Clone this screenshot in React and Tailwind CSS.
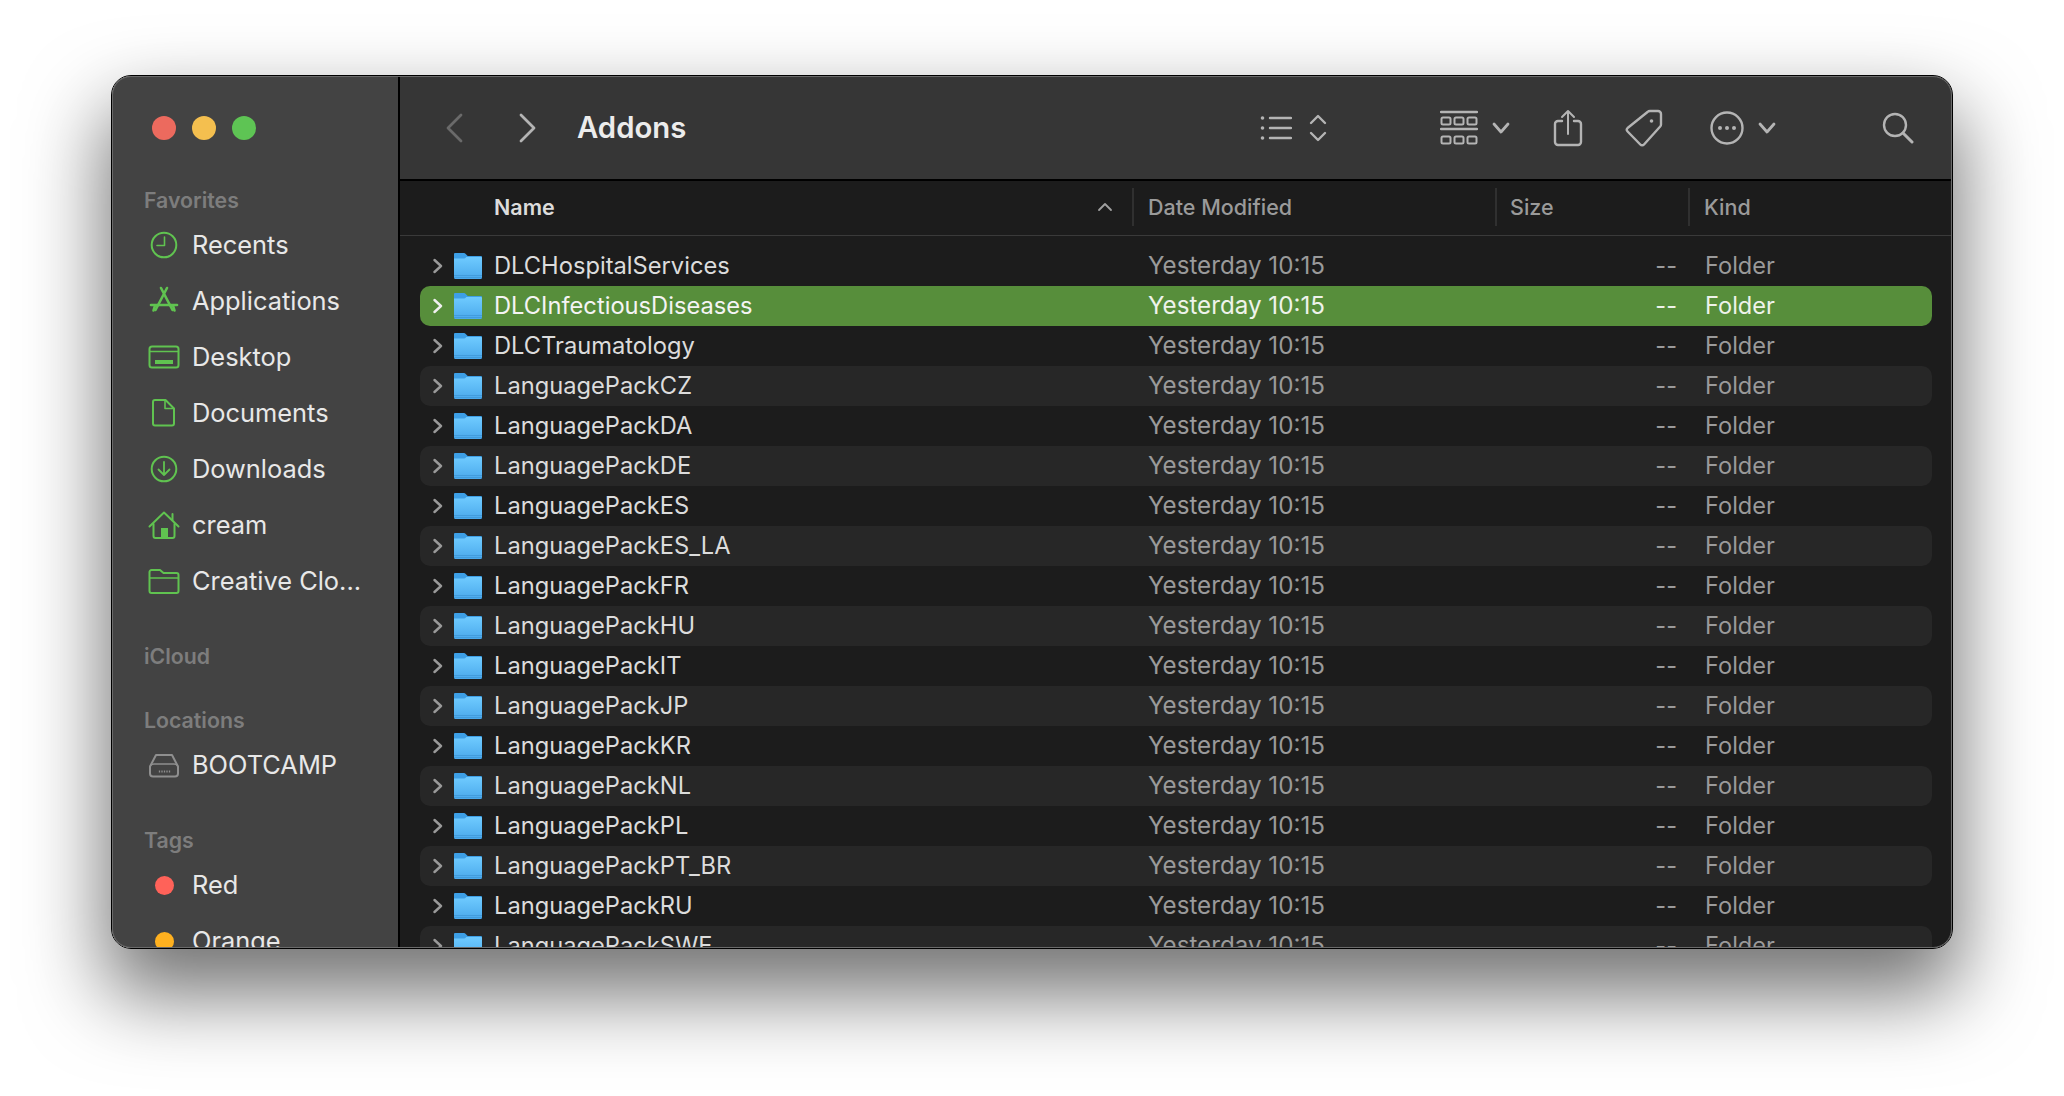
import React from 'react';

const FOLDERS = [
  'DLCHospitalServices', 'DLCInfectiousDiseases', 'DLCTraumatology', 'LanguagePackCZ', 'LanguagePackDA',
  'LanguagePackDE', 'LanguagePackES', 'LanguagePackES_LA', 'LanguagePackFR', 'LanguagePackHU', 'LanguagePackIT',
  'LanguagePackJP', 'LanguagePackKR', 'LanguagePackNL', 'LanguagePackPL', 'LanguagePackPT_BR', 'LanguagePackRU',
  'LanguagePackSWE',
];

const GREEN = '#60c350';

function SideIcon({ children, color = GREEN }) {
  return (
    <svg width="32" height="32" viewBox="0 0 32 32" fill="none" stroke={color} strokeWidth="2" strokeLinecap="round" strokeLinejoin="round">
      {children}
    </svg>
  );
}

const ClockIcon = () => (
  <SideIcon>
    <circle cx="16" cy="16" r="12.3" />
    <path d="M16.500 8v8.500H9" strokeWidth="1.600" />
  </SideIcon>
);

const AppsIcon = () => (
  <SideIcon>
    <path d="M13 3l11.500 22M19 3L7.500 25" strokeWidth="2.600" />
    <path d="M3 20h26" strokeWidth="2.600" />
    <path d="M5.500 25.500l1.500-5M26.500 25.500l-1.500-5" strokeWidth="2.600" />
  </SideIcon>
);

const DesktopIcon = () => (
  <SideIcon>
    <rect x="1.500" y="5.500" width="29" height="21" rx="2.500" />
    <path d="M2 10.500h28" strokeWidth="1.400" />
    <rect x="7" y="19" width="18" height="4" fill={GREEN} stroke="none" />
  </SideIcon>
);

const DocumentIcon = () => (
  <SideIcon>
    <path d="M7 3h10.500L26 11.500V26.500a2 2 0 0 1-2 2H7a2 2 0 0 1-2-2V5a2 2 0 0 1 2-2z" />
    <path d="M17 3.500V11.500h8.500" strokeWidth="1.600" />
  </SideIcon>
);

const DownloadIcon = () => (
  <SideIcon>
    <circle cx="16" cy="16" r="12.3" />
    <path d="M16 9v13M10.500 16.500L16 22l5.500-5.500" strokeWidth="1.800" />
  </SideIcon>
);

const HomeIcon = () => (
  <SideIcon>
    <path d="M1.500 17.500L16 3.500l14.500 14" />
    <path d="M5.500 15v12a2 2 0 0 0 2 2h17a2 2 0 0 0 2-2V15" />
    <path d="M24.500 5v6" />
    <rect x="13" y="19" width="7" height="9.500" fill={GREEN} stroke="none" />
  </SideIcon>
);

const FolderLineIcon = () => (
  <SideIcon>
    <path d="M3.500 5h8.500l3.500 3h13a2 2 0 0 1 2 2v16a2 2 0 0 1-2 2h-25a2 2 0 0 1-2-2V7a2 2 0 0 1 2-2z" />
    <path d="M2 13h28" strokeWidth="1.600" />
  </SideIcon>
);

const DriveIcon = () => (
  <SideIcon color="#8f8f8f">
    <path d="M8 6h16l6 11.500v7a3 3 0 0 1-3 3H5a3 3 0 0 1-3-3v-7z" />
    <path d="M2.500 16.500c1-1 2-1.500 3.500-1.500h20c1.500 0 2.500.5 3.500 1.500" strokeWidth="1.500" />
    <path d="M11.500 21.500v2M14 21.500v2M16.500 21.500v2M19 21.500v2M21.500 21.500v2" strokeWidth="1.300" strokeLinecap="butt" />
  </SideIcon>
);

function Dot({ color }) {
  return (
    <div className="flex h-8 w-8 items-center justify-center">
      <div className={`h-[19px] w-[19px] rounded-full ${color}`} />
    </div>
  );
}

function SideHeader({ label, first }) {
  return (
    <div className={`flex h-[33px] shrink-0 items-center pl-8 text-[21.3px] font-semibold text-[#7d7d7d] ${first ? 'mt-[44px]' : 'mt-[31px]'}`}>
      {label}
    </div>
  );
}

function SideRow({ icon, label }) {
  return (
    <div className="flex h-14 shrink-0 items-center gap-3 pl-9 text-[25.4px] text-[#e8e8e8]">
      {icon}
      <span className="whitespace-nowrap">{label}</span>
    </div>
  );
}

function Sidebar() {
  return (
    <aside className="flex w-[286px] shrink-0 flex-col bg-[#434343] pt-10">
      <div className="flex shrink-0 gap-4 pl-10">
        <div className="h-6 w-6 rounded-full bg-[#ec6a5e]" />
        <div className="h-6 w-6 rounded-full bg-[#f4bf4f]" />
        <div className="h-6 w-6 rounded-full bg-[#5ec454]" />
      </div>
      <SideHeader label="Favorites" first />
      <SideRow icon={<ClockIcon />} label="Recents" />
      <SideRow icon={<AppsIcon />} label="Applications" />
      <SideRow icon={<DesktopIcon />} label="Desktop" />
      <SideRow icon={<DocumentIcon />} label="Documents" />
      <SideRow icon={<DownloadIcon />} label="Downloads" />
      <SideRow icon={<HomeIcon />} label="cream" />
      <SideRow icon={<FolderLineIcon />} label="Creative Clo..." />
      <SideHeader label="iCloud" />
      <SideHeader label="Locations" />
      <SideRow icon={<DriveIcon />} label="BOOTCAMP" />
      <SideHeader label="Tags" />
      <SideRow icon={<Dot color="bg-[#ff6259]" />} label="Red" />
      <SideRow icon={<Dot color="bg-[#ffb11f]" />} label="Orange" />
    </aside>
  );
}

function ToolIcon({ w, h, className, children }) {
  return (
    <svg width={w} height={h} viewBox={`0 0 ${w} ${h}`} fill="none" stroke="#b4b4b4" strokeWidth="2.400" strokeLinecap="round" strokeLinejoin="round" className={`shrink-0 ${className || ''}`}>
      {children}
    </svg>
  );
}

function Toolbar() {
  return (
    <div className="flex h-[105px] shrink-0 items-center border-b-2 border-black bg-[#363636] text-[#b4b4b4]">
      <ToolIcon w={18} h={30} className="ml-[45px]">
        <path d="M16 2L3 15l13 13" stroke="#6a6a6a" strokeWidth="2.800" />
      </ToolIcon>
      <ToolIcon w={18} h={30} className="ml-14">
        <path d="M2 2l13 13L2 28" strokeWidth="2.800" />
      </ToolIcon>
      <div className="ml-10 text-[29.3px] font-semibold text-[#ececec]">Addons</div>

      <ToolIcon w={32} h={26} className="ml-[574px]">
        <path d="M10 3h21M10 13h21M10 23h21" />
        <circle cx="2.500" cy="3" r="1.800" fill="#b4b4b4" stroke="none" />
        <circle cx="2.500" cy="13" r="1.800" fill="#b4b4b4" stroke="none" />
        <circle cx="2.500" cy="23" r="1.800" fill="#b4b4b4" stroke="none" />
      </ToolIcon>
      <ToolIcon w={18} h={30} className="ml-[17px]">
        <path d="M2 10l7-7 7 7M2 20l7 7 7-7" />
      </ToolIcon>

      <ToolIcon w={38} h={36} className="ml-[113px]">
        <path d="M1 2h36M1 19h36" />
        <rect x="1.500" y="7.500" width="9" height="7" rx="1.500" strokeWidth="2" />
        <rect x="14.500" y="7.500" width="9" height="7" rx="1.500" strokeWidth="2" />
        <rect x="27.500" y="7.500" width="9" height="7" rx="1.500" strokeWidth="2" />
        <rect x="1.500" y="26.500" width="9" height="7" rx="1.500" strokeWidth="2" />
        <rect x="14.500" y="26.500" width="9" height="7" rx="1.500" strokeWidth="2" />
        <rect x="27.500" y="26.500" width="9" height="7" rx="1.500" strokeWidth="2" />
      </ToolIcon>
      <ToolIcon w={18} h={12} className="ml-[14px] mt-[1px]">
        <path d="M2 2l7 8 7-8" strokeWidth="2.800" />
      </ToolIcon>

      <ToolIcon w={30} h={38} className="ml-[43px]">
        <path d="M9 12H5a3 3 0 0 0-3 3v18a3 3 0 0 0 3 3h20a3 3 0 0 0 3-3V15a3 3 0 0 0-3-3h-4" />
        <path d="M15 25V2M9 8l6-6 6 6" strokeWidth="2" />
      </ToolIcon>

      <ToolIcon w={38} h={38} className="ml-[42px]">
        <path d="M25 2h8a3 3 0 0 1 3 3v10.500a3 3 0 0 1-.8 2L19 35.500a2.500 2.500 0 0 1-3.700 0L2.600 22.500a2.500 2.500 0 0 1 0-3.500L22.500 3a3.500 3.500 0 0 1 2.500-1z" />
        <circle cx="26.500" cy="12" r="1.800" fill="#b4b4b4" stroke="none" />
      </ToolIcon>

      <ToolIcon w={34} h={34} className="ml-[47px]">
        <circle cx="17" cy="17" r="15.500" />
        <circle cx="10" cy="17" r="2" fill="#b4b4b4" stroke="none" />
        <circle cx="17" cy="17" r="2" fill="#b4b4b4" stroke="none" />
        <circle cx="24" cy="17" r="2" fill="#b4b4b4" stroke="none" />
      </ToolIcon>
      <ToolIcon w={18} h={12} className="ml-[14px] mt-[1px]">
        <path d="M2 2l7 8 7-8" strokeWidth="2.800" />
      </ToolIcon>

      <ToolIcon w={32} h={32} className="ml-[106px]">
        <circle cx="13" cy="13" r="11" />
        <path d="M21 21l9 9" strokeWidth="3" />
      </ToolIcon>
    </div>
  );
}

function ListHeader() {
  return (
    <div className="flex h-[55px] shrink-0 items-center border-b border-[#3a3a3a] pb-[2px] text-[21.5px] font-medium text-[#9a9a9a]">
      <div className="ml-[94px] w-[598px] font-semibold text-[#dcdcdc]">Name</div>
      <svg width="16" height="10" viewBox="0 0 16 10" fill="none" stroke="#a0a0a0" strokeWidth="1.800" strokeLinecap="round" strokeLinejoin="round" className="ml-[5px] shrink-0">
        <path d="M2 8l6-6 6 6" />
      </svg>
      <div className="ml-[19px] h-[38px] w-[2px] shrink-0 bg-[#303030]" />
      <div className="ml-[14px] w-[347px]">Date Modified</div>
      <div className="h-[38px] w-[2px] shrink-0 bg-[#303030]" />
      <div className="ml-[13px] w-[178px]">Size</div>
      <div className="h-[38px] w-[2px] shrink-0 bg-[#303030]" />
      <div className="ml-[14px]">Kind</div>
    </div>
  );
}

function FolderIcon() {
  return (
    <svg width="28" height="26" viewBox="0 0 28 26" className="ml-[11px] shrink-0">
      <path d="M1 0h8.500c1 0 1.500.4 2.200 1l2 2H27a1 1 0 0 1 1 1v4H0V1a1 1 0 0 1 1-1z" fill="#3d9fe6" />
      <path d="M0 5.500h9.500c1.200 0 2-.5 2.800-1.500H27a1 1 0 0 1 1 1v19.500a1.500 1.500 0 0 1-1.500 1.500h-25A1.500 1.500 0 0 1 0 24.500z" fill="url(#folderBody)" />
      <path d="M0 22.500h28M0 24.500h28" stroke="#3f97d8" strokeWidth="0.800" />
    </svg>
  );
}

function FileRow({ name, index }) {
  const selected = index === 1;
  const striped = index % 2 === 1;
  return (
    <div className={`mx-5 flex h-10 shrink-0 items-center rounded-[10px] text-[23.6px] ${selected ? 'bg-[#578e3b] text-[#eef3ea]' : striped ? 'bg-[#272727]' : ''}`}>
      <div className={`flex w-[728px] shrink-0 items-center text-[23.7px] ${selected ? 'text-[#f4f4f4]' : 'text-[#dcdcdc]'}`}>
        <svg width="10" height="16" viewBox="0 0 10 16" fill="none" stroke={selected ? '#f0f0f0' : '#9a9a9a'} strokeWidth="2.400" strokeLinecap="round" strokeLinejoin="round" className="ml-[13px] shrink-0">
          <path d="M1.500 2l6.500 6-6.500 6" />
        </svg>
        <FolderIcon />
        <span className="ml-3 whitespace-nowrap">{name}</span>
      </div>
      <div className={`flex flex-1 items-center ${selected ? '' : 'text-[#9a9a9a]'}`}>
        <span className="w-[362px] shrink-0 text-[24.2px]">Yesterday 10:15</span>
        <span className="w-[167px] shrink-0 text-right">--</span>
        <span className="ml-7">Folder</span>
      </div>
    </div>
  );
}

export default function App() {
  return (
    <div className="h-[1096px] w-full overflow-hidden bg-white pl-[111px] pt-[75px] font-['Inter',sans-serif]">
      <svg width="0" height="0" className="absolute">
        <defs>
          <linearGradient id="folderBody" x1="0" y1="0" x2="0" y2="1">
            <stop offset="0" stopColor="#6fcbff" />
            <stop offset="1" stopColor="#4ba9ec" />
          </linearGradient>
        </defs>
      </svg>
      <div className="relative flex h-[874px] w-[1842px] overflow-hidden rounded-[20px] border border-black shadow-[0_40px_80px_6px_rgba(0,0,0,0.55)]">
        <Sidebar />
        <main className="flex min-w-0 flex-1 flex-col overflow-hidden border-l-2 border-black bg-[#1c1c1c]">
          <Toolbar />
          <ListHeader />
          <div className="flex flex-col pt-[10px]">
            {FOLDERS.map((name, i) => (
              <FileRow key={name} name={name} index={i} />
            ))}
          </div>
        </main>
        {/* the light hairline just inside the window edge */}
        <div className="pointer-events-none absolute inset-0 rounded-[19px] border border-[#6a6a6a]" />
      </div>
    </div>
  );
}
